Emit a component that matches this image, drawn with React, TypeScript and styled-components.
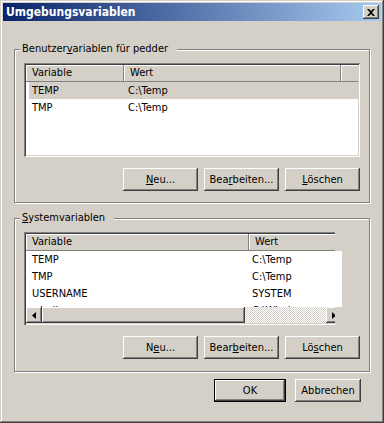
import styled, { createGlobalStyle } from 'styled-components';

const GlobalStyle = createGlobalStyle`
  html, body {
    margin: 0;
    padding: 0;
    background: #d4d0c8;
  }
  body {
    font-family: "DejaVu Sans Condensed", Tahoma, "Liberation Sans", sans-serif;
    font-size: 11px;
    color: #000;
  }
`;

const raised = `
  background: #d4d0c8;
  box-shadow: inset -1px -1px #404040, inset 1px 1px #fff,
    inset -2px -2px #808080, inset 2px 2px #d4d0c8;
`;

const Window = styled.div`
  width: 384px;
  height: 423px;
  box-sizing: border-box;
  padding: 3px;
  background: #d4d0c8;
  box-shadow: inset -1px -1px #404040, inset 1px 1px #d4d0c8,
    inset -2px -2px #808080, inset 2px 2px #fff;
  display: flex;
  flex-direction: column;
`;

const TitleBar = styled.div`
  height: 18px;
  flex: none;
  display: flex;
  align-items: center;
  padding: 0 2px 0 3px;
  background: linear-gradient(to right, #0a246a, #a6caf0);
`;

const Title = styled.span`
  color: #fff;
  font-family: "DejaVu Sans Condensed", Tahoma, sans-serif;
  font-weight: bold;
  font-size: 12px;
  line-height: 14px;
`;

const CloseButton = styled.div`
  margin-left: auto;
  width: 16px;
  height: 14px;
  ${raised}
  display: flex;
  align-items: center;
  justify-content: center;
`;

const Body = styled.div`
  flex: 1;
  display: flex;
  flex-direction: column;
  padding: 28px 11px 0;
`;

const Group = styled.div<{ $gap?: number }>`
  height: 154px;
  box-sizing: border-box;
  margin-top: ${(p) => p.$gap ?? 0}px;
  padding: 0 9px;
  border: 1px solid #808080;
  box-shadow: inset 1px 1px #fff, 1px 1px #fff;
  display: flex;
  flex-direction: column;
`;

const Legend = styled.div`
  align-self: flex-start;
  height: 14px;
  line-height: 14px;
  margin: -8px 0 0 -4px;
  padding: 0 9px 0 2px;
  background: #d4d0c8;
  white-space: nowrap;
`;

const List = styled.div<{ $top: number; $height: number; $cut?: boolean }>`
  margin-top: ${(p) => p.$top}px;
  height: ${(p) => p.$height}px;
  box-sizing: border-box;
  display: flex;
  flex-direction: column;
  ${(p) =>
    p.$cut
      ? `
    width: 311px;
    padding: 2px 0 2px 2px;
    box-shadow: inset 1px 1px #808080, inset 2px 2px #404040,
      inset 0 -1px #fff, inset 0 -2px #d4d0c8;
  `
      : `
    padding: 2px;
    overflow: hidden;
    background: #fff;
    box-shadow: inset 1px 1px #808080, inset -1px -1px #fff,
      inset 2px 2px #404040, inset -2px -2px #d4d0c8;
  `}
`;

const HeaderRow = styled.div`
  display: flex;
  height: 17px;
  flex: none;
  overflow: hidden;
  background: #d4d0c8;
`;

const HeaderCell = styled.div<{ $w: number }>`
  width: ${(p) => p.$w}px;
  flex: none;
  box-sizing: border-box;
  padding-left: 6px;
  line-height: 16px;
  box-shadow: inset -1px -1px #808080, inset 1px 1px #fff;
`;

const HeaderFill = styled.div`
  flex: 1;
  box-shadow: inset 0 -1px #808080, inset 1px 1px #fff;
`;

const Rows = styled.div<{ $spill?: number }>`
  flex: 1;
  overflow: hidden;
  background: #fff;
  margin-right: -${(p) => p.$spill ?? 0}px;
`;

const Row = styled.div<{ $selected?: boolean }>`
  display: flex;
  height: 17px;
  line-height: 17px;
  margin-left: 3px;
  background: ${(p) => (p.$selected ? '#d4d0c8' : 'transparent')};
`;

const Cell = styled.div<{ $w: number }>`
  width: ${(p) => p.$w}px;
  flex: none;
  box-sizing: border-box;
  padding-left: 3px;
  white-space: nowrap;
  overflow: hidden;
`;

const HScroll = styled.div`
  display: flex;
  height: 16px;
  flex: none;
  overflow: hidden;
`;

const ArrowButton = styled.div`
  width: 16px;
  flex: none;
  ${raised}
  display: flex;
  align-items: center;
  justify-content: center;
`;

const Thumb = styled.div<{ $w: number }>`
  width: ${(p) => p.$w}px;
  flex: none;
  ${raised}
`;

const Track = styled.div<{ $w: number }>`
  width: ${(p) => p.$w}px;
  flex: none;
  background: repeating-conic-gradient(#fff 0 25%, #d4d0c8 0 50%) 0 0 / 2px 2px;
`;

const ButtonRow = styled.div<{ $top: number }>`
  margin-top: ${(p) => p.$top}px;
  display: flex;
  justify-content: flex-end;
  gap: 6px;
`;

const Button = styled.div<{ $w?: number; $default?: boolean }>`
  width: ${(p) => p.$w ?? 75}px;
  height: 23px;
  box-sizing: border-box;
  display: flex;
  align-items: center;
  justify-content: center;
  background: #d4d0c8;
  box-shadow: ${(p) =>
    p.$default
      ? 'inset 0 0 0 1px #000, inset -2px -2px #404040, inset 2px 2px #fff, inset -3px -3px #808080'
      : 'inset -1px -1px #404040, inset 1px 1px #fff, inset -2px -2px #808080, inset 2px 2px #d4d0c8'};
`;

const Footer = styled.div`
  margin-top: 7px;
  padding-right: 9px;
  display: flex;
  justify-content: flex-end;
  gap: 9px;
`;

const Arrow = ({ dir }: { dir: 'left' | 'right' }) => (
  <svg width="4" height="7" viewBox="0 0 4 7">
    <path d={dir === 'left' ? 'M4 0 L0 3.5 L4 7 Z' : 'M0 0 L4 3.5 L0 7 Z'} fill="#000" />
  </svg>
);

const userVars = [
  { name: 'TEMP', value: 'C:\\Temp' },
  { name: 'TMP', value: 'C:\\Temp' },
];

const sysVars = [
  { name: 'TEMP', value: 'C:\\Temp' },
  { name: 'TMP', value: 'C:\\Temp' },
  { name: 'USERNAME', value: 'SYSTEM' },
  { name: 'windir', value: 'C:\\Windows' },
];

const App = () => (
  <>
    <GlobalStyle />
    <Window>
      <TitleBar>
        <Title>Umgebungsvariablen</Title>
        <CloseButton>
          <svg width="8" height="7" viewBox="0 0 8 7">
            <path d="M0 0h2l2 2 2-2h2L5 3.5 8 7H6L4 5 2 7H0l3-3.5z" fill="#000" />
          </svg>
        </CloseButton>
      </TitleBar>
      <Body>
        <Group>
          <Legend>
            Benutzer<u>v</u>ariablen für pedder
          </Legend>
          <List $top={7} $height={94}>
            <HeaderRow>
              <HeaderCell $w={98}>Variable</HeaderCell>
              <HeaderCell $w={217}>Wert</HeaderCell>
              <HeaderFill />
            </HeaderRow>
            <Rows>
              {userVars.map((v, i) => (
                <Row key={v.name} $selected={i === 0}>
                  <Cell $w={96}>{v.name}</Cell>
                  <Cell $w={217}>{v.value}</Cell>
                </Row>
              ))}
            </Rows>
          </List>
          <ButtonRow $top={11}>
            <Button>
              <span>
                <u>N</u>eu...
              </span>
            </Button>
            <Button>
              <span>
                Bea<u>r</u>beiten...
              </span>
            </Button>
            <Button>
              <span>
                <u>L</u>öschen
              </span>
            </Button>
          </ButtonRow>
        </Group>
        <Group $gap={15}>
          <Legend>
            <u>S</u>ystemvariablen
          </Legend>
          <List $top={7} $height={93} $cut>
            <HeaderRow>
              <HeaderCell $w={223}>Variable</HeaderCell>
              <HeaderCell $w={93}>Wert</HeaderCell>
            </HeaderRow>
            <Rows $spill={7}>
              {sysVars.map((v) => (
                <Row key={v.name}>
                  <Cell $w={220}>{v.name}</Cell>
                  <Cell $w={93}>{v.value}</Cell>
                </Row>
              ))}
            </Rows>
            <HScroll>
              <ArrowButton>
                <Arrow dir="left" />
              </ArrowButton>
              <Thumb $w={203} />
              <Track $w={81} />
              <ArrowButton>
                <Arrow dir="right" />
              </ArrowButton>
            </HScroll>
          </List>
          <ButtonRow $top={11}>
            <Button>
              <span>
                N<u>e</u>u...
              </span>
            </Button>
            <Button>
              <span>
                Bear<u>b</u>eiten...
              </span>
            </Button>
            <Button>
              <span>
                Lö<u>s</u>chen
              </span>
            </Button>
          </ButtonRow>
        </Group>
        <Footer>
          <Button $w={72} $default>
            OK
          </Button>
          <Button $w={66}>Abbrechen</Button>
        </Footer>
      </Body>
    </Window>
  </>
);

export default App;
